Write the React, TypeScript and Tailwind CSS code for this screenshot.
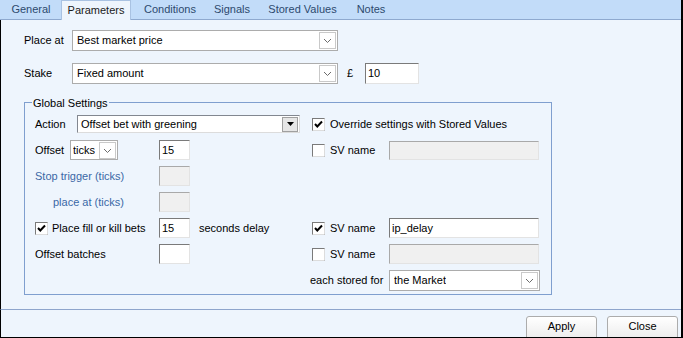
import React from 'react';

const TABS = [
  { label: 'General', w: 'w-[60px]' },
  { label: 'Parameters', w: 'w-[70px]', active: true },
  { label: 'Conditions', w: 'w-[78px]' },
  { label: 'Signals', w: 'w-[46px]' },
  { label: 'Stored Values', w: 'w-[95px]' },
  { label: 'Notes', w: 'w-[42px]' },
];

function Chevron() {
  return (
    <span className="flex h-[17px] w-[17px] shrink-0 items-center justify-center border border-[#c9c9c9] bg-white">
      <svg width="11" height="11" viewBox="0 0 11 11">
        <path d="M2 4 L5.5 7.5 L9 4" fill="none" stroke="#6b6b6b" strokeWidth="1" />
      </svg>
    </span>
  );
}

// modern (flat) combo box
function Combo({ value, className }: { value: string; className: string }) {
  return (
    <div className={`flex items-center justify-between border border-[#acacac] bg-white pl-[4px] pr-[1px] ${className}`}>
      <span className="truncate">{value}</span>
      <Chevron />
    </div>
  );
}

// classic drop-down list with the grey button
function ClassicCombo({ value, className }: { value: string; className: string }) {
  return (
    <div className={`flex items-center justify-between border border-[#828790] border-b-[#dcdcdc] border-r-[#dcdcdc] bg-white pl-[3px] pr-[1px] ${className}`}>
      <span className="truncate">{value}</span>
      <span className="flex h-[15px] w-[16px] items-center justify-center border border-[#a0a0a0] bg-[#e6e6e6]">
        <svg width="7" height="4" viewBox="0 0 7 4">
          <path d="M0 0 L7 0 L3.5 4 Z" fill="#000" />
        </svg>
      </span>
    </div>
  );
}

function TextBox({ value = '', disabled = false, className }: { value?: string; disabled?: boolean; className: string }) {
  return (
    <div
      className={`flex items-center pl-[2px] ${
        disabled
          ? 'border border-[#a9a9a9] border-b-[#e3e3e3] border-r-[#e3e3e3] bg-[#f0f0f0]'
          : 'border border-[#7a7a7a] border-b-[#e3e3e3] border-r-[#e3e3e3] bg-white'
      } ${className}`}
    >
      {value}
    </div>
  );
}

function CheckBox({ checked = false }: { checked?: boolean }) {
  return (
    <svg width="13" height="13" viewBox="0 0 13 13" className="shrink-0">
      <rect x="0.5" y="0.5" width="12" height="12" fill="#fff" stroke="#7a7a7a" />
      <path d="M12.5 0.5 V12.5 H0.5" fill="none" stroke="#dcdcdc" />
      {checked && <path d="M3 6 L5.3 8.5 L10 3.5" fill="none" stroke="#000" strokeWidth="2" />}
    </svg>
  );
}

function SvLabel({ checked = false }: { checked?: boolean }) {
  return (
    <div className="flex w-[79px] items-center pl-[2px]">
      <CheckBox checked={checked} />
      <span className="ml-[5px]">SV name</span>
    </div>
  );
}

export default function App() {
  return (
    <div className="flex h-[338px] w-[683px] flex-col border-r-2 border-black bg-[#eef5fd] font-['Liberation_Sans',Arial,sans-serif] text-[11px] text-black">
      {/* tab strip */}
      <div className="flex h-[20px] items-end border-b border-[#8ea9cf] bg-[#c2dcf9] pl-[1px]">
        {TABS.map((t) =>
          t.active ? (
            <div
              key={t.label}
              className={`-mb-px flex h-[20px] items-center justify-center border border-b-0 border-[#a9c2e2] bg-[#eef5fd] text-[#1a1a1a] ${t.w}`}
            >
              {t.label}
            </div>
          ) : (
            <div key={t.label} className={`flex h-[19px] items-center justify-center text-[#2d4a6e] ${t.w}`}>
              {t.label}
            </div>
          )
        )}
      </div>

      {/* page */}
      <div className="flex h-[290px] flex-col border-b border-l border-b-[#8ea5cc] border-l-black pl-[23px] pt-[10px]">
        <div className="flex h-[21px] items-center">
          <span className="w-[48px]">Place at</span>
          <Combo value="Best market price" className="h-[21px] w-[266px]" />
        </div>
        <div className="mt-[12px] flex h-[21px] items-center">
          <span className="w-[48px]">Stake</span>
          <Combo value="Fixed amount" className="h-[21px] w-[266px]" />
          <span className="ml-[9px] w-[18px]">£</span>
          <TextBox value="10" className="h-[21px] w-[54px]" />
        </div>

        {/* group box */}
        <div className="relative mt-[18px] h-[193px] w-[528px] border border-[#7f9fcf] pl-[10px] pt-[8px]">
          <span className="absolute -top-[8px] left-[7px] bg-[#eef5fd] px-px">Global Settings</span>

          <div className="flex h-[26px] items-center">
            <div className="flex w-[275px] items-center">
              <span className="w-[42px]">Action</span>
              <ClassicCombo value="Offset bet with greening" className="h-[18px] w-[223px]" />
            </div>
            <div className="flex items-center pl-[2px]">
              <CheckBox checked />
              <span className="ml-[5px]">Override settings with Stored Values</span>
            </div>
          </div>

          <div className="flex h-[26px] items-center">
            <div className="flex w-[275px] items-center">
              <span className="w-[35px]">Offset</span>
              <Combo value="ticks" className="h-[20px] w-[48px] !pl-[2px]" />
              <TextBox value="15" className="ml-[41px] h-[20px] w-[31px]" />
            </div>
            <SvLabel />
            <TextBox disabled className="h-[19px] w-[150px]" />
          </div>

          <div className="flex h-[26px] items-center">
            <div className="flex w-[275px] items-center">
              <span className="w-[124px] text-[#3a68a6]">Stop trigger (ticks)</span>
              <TextBox disabled className="h-[20px] w-[31px]" />
            </div>
          </div>

          <div className="flex h-[26px] items-center">
            <div className="flex w-[275px] items-center">
              <span className="w-[124px] pl-[18px] text-[#3a68a6]">place at (ticks)</span>
              <TextBox disabled className="h-[20px] w-[31px]" />
            </div>
          </div>

          <div className="flex h-[26px] items-center">
            <div className="flex w-[275px] items-center">
              <div className="flex w-[124px] items-center">
                <CheckBox checked />
                <span className="ml-[4px]">Place fill or kill bets</span>
              </div>
              <TextBox value="15" className="h-[20px] w-[31px]" />
              <span className="ml-[9px]">seconds delay</span>
            </div>
            <SvLabel checked />
            <TextBox value="ip_delay" className="h-[20px] w-[150px]" />
          </div>

          <div className="flex h-[26px] items-center">
            <div className="flex w-[275px] items-center">
              <span className="w-[124px]">Offset batches</span>
              <TextBox className="h-[20px] w-[31px]" />
            </div>
            <SvLabel />
            <TextBox disabled className="h-[20px] w-[150px]" />
          </div>

          <div className="flex h-[26px] items-center">
            <div className="w-[275px]" />
            <span className="w-[79px]">each stored for</span>
            <Combo value="the Market" className="h-[21px] w-[151px]" />
          </div>
        </div>
      </div>

      {/* buttons */}
      <div className="flex h-[28px] justify-end gap-[10px] overflow-hidden border-b border-l border-black pr-[3px] pt-[6px]">
        <button className="h-[24px] w-[71px] shrink-0 rounded-[3px] border border-[#acacac] bg-gradient-to-b from-[#ffffff] to-[#ececec] pb-[3px]">
          Apply
        </button>
        <button className="h-[24px] w-[71px] shrink-0 rounded-[3px] border border-[#acacac] bg-gradient-to-b from-[#ffffff] to-[#ececec] pb-[3px]">
          Close
        </button>
      </div>
    </div>
  );
}
